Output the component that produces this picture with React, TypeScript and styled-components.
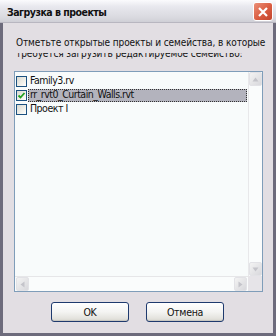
import React from "react";
import styled, { createGlobalStyle } from "styled-components";

const Global = createGlobalStyle`
  html, body { margin: 0; padding: 0; background: #e2dee3; }
  body { font-family: "DejaVu Sans Condensed", "DejaVu Sans", sans-serif; font-stretch: condensed; }
`;

const Window = styled.div`
  width: 276px;
  height: 336px;
  box-sizing: border-box;
  background: #e2dee3;
  border-left: 3px solid #6d6b7c;
  border-right: 3px solid #6d6b7c;
  border-bottom: 3px solid #6d6b7c;
  display: flex;
  flex-direction: column;
  position: relative;
`;

const TitleBar = styled.div`
  height: 23px;
  flex: none;
  margin: 0 -3px;
  padding: 0 3px 0 7px;
  box-sizing: border-box;
  display: flex;
  align-items: center;
  justify-content: space-between;
  background: linear-gradient(#fbfbfd 0%, #e8e8ee 30%, #d9d9df 80%, #cfcfd6 100%);
  border-bottom: 1px solid #b8b6c0;
`;

const Title = styled.div`
  font-weight: bold;
  font-size: 10.5px;
  letter-spacing: -0.5px;
  color: #111;
  margin-top: 2px;
`;

const CloseButton = styled.div`
  width: 20px;
  height: 19px;
  margin-top: 1px;
  box-sizing: border-box;
  border: 1px solid #fff;
  border-radius: 3px;
  background: linear-gradient(135deg, #ea8f78 0%, #da5c40 55%, #c1442c 100%);
  display: flex;
  align-items: center;
  justify-content: center;
`;

const Body = styled.div`
  flex: 1;
  display: flex;
  flex-direction: column;
  padding: 14px 10px 0 11px;
`;

const Instruction = styled.div`
  font-size: 10px;
  letter-spacing: -0.1px;
  line-height: 11px;
  color: #111;
  height: 26px;
  margin-bottom: 8px;
  padding-left: 2px;
  white-space: nowrap;
  flex: none;
`;

const ClippedLine = styled.div`
  clip-path: inset(45% 0 0 0);
`;

const ListBox = styled.div`
  height: 221px;
  flex: none;
  box-sizing: border-box;
  border: 1px solid #7f9db9;
  background: #f8fbfb;
  display: grid;
  grid-template-columns: 1fr 14px;
  grid-template-rows: 1fr 15px;
`;

const Items = styled.div`
  padding: 2px 0 0 1px;
  display: flex;
  flex-direction: column;
`;

const Row = styled.div`
  height: 14px;
  display: flex;
  align-items: center;
`;

const Box = styled.div`
  width: 11px;
  height: 11px;
  box-sizing: border-box;
  border: 1px solid #1c5180;
  background: linear-gradient(135deg, #d9d9d2 0%, #f0f0ea 60%, #ffffff 100%);
  display: flex;
  align-items: center;
  justify-content: center;
  flex: none;
`;

const Label = styled.div<{ $selected?: boolean }>`
  flex: 1;
  height: 13px;
  margin-left: 1px;
  margin-right: 1px;
  box-sizing: border-box;
  padding-left: 1px;
  font-size: 10.5px;
  letter-spacing: -0.5px;
  line-height: 9px;
  color: #111;
  white-space: nowrap;
  background: ${(p) => (p.$selected ? "#b3b3bd" : "transparent")};
  border: 1px dotted ${(p) => (p.$selected ? "#333" : "transparent")};
`;

const VScroll = styled.div`
  border-left: 1px solid #e8e8ea;
  display: flex;
  flex-direction: column;
  justify-content: space-between;
  background: #fafcfc;
`;

const HScroll = styled.div`
  border-top: 1px solid #e6e6e8;
  display: flex;
  justify-content: space-between;
  padding: 0 1px 0 1px;
  background: #fafcfc;
`;

const ScrollBtn = styled.div`
  width: 13px;
  height: 14px;
  box-sizing: border-box;
  border: 1px solid #e2e2e6;
  border-radius: 2px;
  background: linear-gradient(135deg, #f3f3f3, #d8d8dc);
  display: flex;
  align-items: center;
  justify-content: center;
`;

const Corner = styled.div`
  background: #e6e4e8;
`;

const Buttons = styled.div`
  display: flex;
  justify-content: center;
  gap: 17px;
  margin-top: 10px;
  padding-right: 2px;
`;

const Button = styled.div`
  width: 78px;
  height: 20px;
  box-sizing: border-box;
  border: 1px solid #1f3a6e;
  border-radius: 3px;
  background: linear-gradient(#ffffff 0%, #f4f4f2 50%, #e4e3de 85%, #d6d5ce 100%);
  box-shadow: inset 0 -1px 0 #c9c8c2;
  display: flex;
  align-items: center;
  justify-content: center;
  font-size: 10.5px;
  letter-spacing: -0.3px;
  color: #111;
`;

const Arrow = ({ dir }: { dir: "up" | "down" | "left" | "right" }) => {
  const rot = { up: 0, right: 90, down: 180, left: 270 }[dir];
  return (
    <svg width="7" height="7" viewBox="0 0 7 7" style={{ transform: `rotate(${rot}deg)` }}>
      <path d="M0.5 5.5 L3.5 1.5 L6.5 5.5 Z" fill="#c4c4ca" />
    </svg>
  );
};

const Check = () => (
  <svg width="9" height="9" viewBox="0 0 9 9">
    <path d="M1.5 4.5 L3.5 6.5 L7.5 2" stroke="#21a121" strokeWidth="1.8" fill="none" />
  </svg>
);

export default function App() {
  const items = [
    { name: "Family3.rv", checked: false, selected: false },
    { name: "rr_rvt0_Curtain_Walls.rvt", checked: true, selected: true },
    { name: "Проект I", checked: false, selected: false },
  ];
  return (
    <>
      <Global />
      <Window>
        <TitleBar>
          <Title>Загрузка в проекты</Title>
          <CloseButton>
            <svg width="12" height="12" viewBox="0 0 12 12">
              <path d="M2 2 L10 10 M10 2 L2 10" stroke="#fff" strokeWidth="2.2" />
            </svg>
          </CloseButton>
        </TitleBar>
        <Body>
          <Instruction>
            <div>Отметьте открытые проекты и семейства, в которые</div>
            <ClippedLine>требуется загрузить редактируемое семейство:</ClippedLine>
          </Instruction>
          <ListBox>
            <Items>
              {items.map((it) => (
                <Row key={it.name}>
                  <Box>{it.checked && <Check />}</Box>
                  <Label $selected={it.selected}>{it.name}</Label>
                </Row>
              ))}
            </Items>
            <VScroll>
              <ScrollBtn><Arrow dir="up" /></ScrollBtn>
              <ScrollBtn><Arrow dir="down" /></ScrollBtn>
            </VScroll>
            <HScroll>
              <ScrollBtn><Arrow dir="left" /></ScrollBtn>
              <ScrollBtn><Arrow dir="right" /></ScrollBtn>
            </HScroll>
            <Corner />
          </ListBox>
          <Buttons>
            <Button>OK</Button>
            <Button>Отмена</Button>
          </Buttons>
        </Body>
      </Window>
    </>
  );
}
